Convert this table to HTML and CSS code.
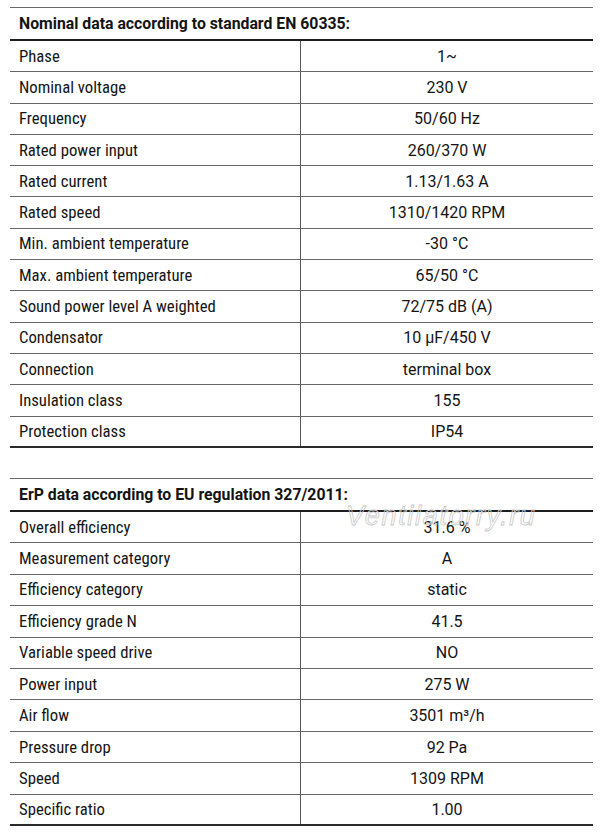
FILE: index.html
```html
<!DOCTYPE html>
<html>
<head>
<meta charset="utf-8">
<link rel="stylesheet" href="styles.css">
</head>
<body>
<div class="page">
  <section class="spec">
    <div class="spec-head">Nominal data according to standard EN 60335:</div>
    <div class="spec-body">
      <div class="row"><div class="k">Phase</div><div class="v">1~</div></div>
      <div class="row"><div class="k">Nominal voltage</div><div class="v">230 V</div></div>
      <div class="row"><div class="k">Frequency</div><div class="v">50/60 Hz</div></div>
      <div class="row"><div class="k">Rated power input</div><div class="v">260/370 W</div></div>
      <div class="row"><div class="k">Rated current</div><div class="v">1.13/1.63 A</div></div>
      <div class="row"><div class="k">Rated speed</div><div class="v">1310/1420 RPM</div></div>
      <div class="row"><div class="k">Min. ambient temperature</div><div class="v">-30 °C</div></div>
      <div class="row"><div class="k">Max. ambient temperature</div><div class="v">65/50 °C</div></div>
      <div class="row"><div class="k">Sound power level A weighted</div><div class="v">72/75 dB (A)</div></div>
      <div class="row"><div class="k">Condensator</div><div class="v">10 µF/450 V</div></div>
      <div class="row"><div class="k">Connection</div><div class="v">terminal box</div></div>
      <div class="row"><div class="k">Insulation class</div><div class="v">155</div></div>
      <div class="row last"><div class="k">Protection class</div><div class="v">IP54</div></div>
    </div>
  </section>

  <section class="spec second">
    <div class="spec-head">ErP data according to EU regulation 327/2011:</div>
    <div class="spec-body">
      <div class="row"><div class="k">Overall efficiency</div><div class="v">31.6 %</div></div>
      <div class="row"><div class="k">Measurement category</div><div class="v">A</div></div>
      <div class="row"><div class="k">Efficiency category</div><div class="v">static</div></div>
      <div class="row"><div class="k">Efficiency grade N</div><div class="v">41.5</div></div>
      <div class="row"><div class="k">Variable speed drive</div><div class="v">NO</div></div>
      <div class="row"><div class="k">Power input</div><div class="v">275 W</div></div>
      <div class="row"><div class="k">Air flow</div><div class="v">3501 m³/h</div></div>
      <div class="row"><div class="k">Pressure drop</div><div class="v">92 Pa</div></div>
      <div class="row"><div class="k">Speed</div><div class="v">1309 RPM</div></div>
      <div class="row last"><div class="k">Specific ratio</div><div class="v">1.00</div></div>
    </div>
    <div class="watermark">Ventilatorry.ru</div>
  </section>
</div>
</body>
</html>
```

FILE: styles.css
```css
html, body {
  margin: 0;
  padding: 0;
  background: #ffffff;
}

.page {
  width: 583px;
  margin-left: 10px;
  padding-top: 7px;
  font-family: Roboto, "Liberation Sans", sans-serif;
  font-size: 16px;
  color: #141414;
}

.spec {
  position: relative;
  border-top: 1px solid #6a6a6a;
}

.spec.second {
  margin-top: 30px;
}

.spec-head {
  box-sizing: border-box;
  height: 33px;
  padding-left: 9px;
  display: flex;
  align-items: center;
  font-weight: bold;
  font-stretch: 88%;
  font-size: 15.8px;
  border-bottom: 2px solid #1e1e1e;
}

.row {
  box-sizing: border-box;
  height: 31.3px;
  display: grid;
  grid-template-columns: 291px 1fr;
  border-bottom: 1px solid #666666;
}

.row.last {
  border-bottom: 2px solid #2a2a2a;
}

.second .row {
  height: 31.45px;
}

.k {
  display: flex;
  align-items: center;
  padding-left: 9px;
  font-stretch: 75%;
  font-size: 16.7px;
  border-right: 1px solid #555555;
}

.v {
  display: flex;
  align-items: center;
  justify-content: center;
  font-stretch: 88%;
}

.watermark {
  position: absolute;
  left: 336px;
  top: 22px;
  font-family: "Liberation Sans", sans-serif;
  font-stretch: normal;
  font-style: italic;
  font-size: 27px;
  color: transparent;
  -webkit-text-stroke: 0.8px #c8c8c8;
  letter-spacing: 1.7px;
  pointer-events: none;
}
```
